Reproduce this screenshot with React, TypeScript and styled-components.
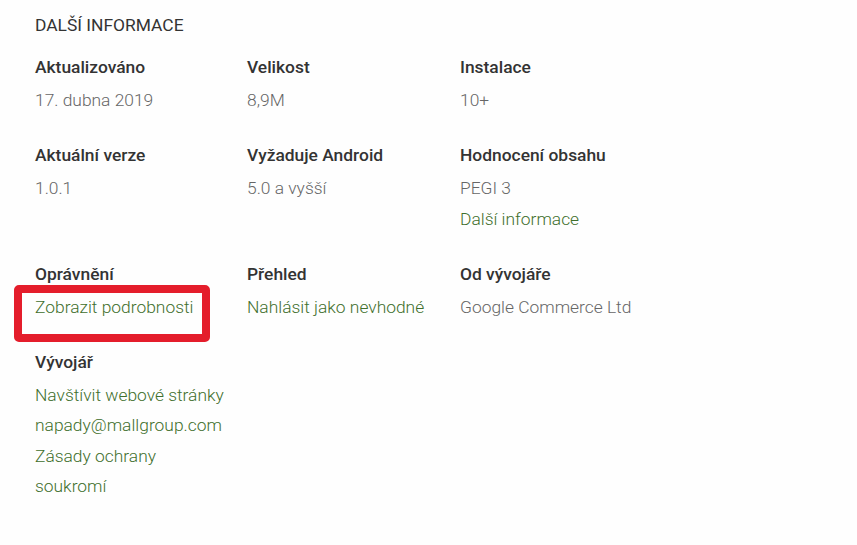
import React from "react";
import styled, { createGlobalStyle } from "styled-components";

const Global = createGlobalStyle`
  html, body { margin: 0; padding: 0; background: #ffffff; }
  body { font-family: Roboto, "Noto Sans", Arial, sans-serif; -webkit-font-smoothing: antialiased; }
`;

const Page = styled.div`
  width: 857px;
  height: 545px;
  box-sizing: border-box;
  padding: 13px 0 0 35px;
  background: #fefefe;
  overflow: hidden;
`;

const Heading = styled.h2`
  margin: 0 0 12px 0;
  font-size: 17.4px;
  line-height: 24px;
  font-weight: 400;
  color: #333333;
  text-transform: uppercase;
  letter-spacing: 0;
`;

const Grid = styled.div`
  display: grid;
  grid-template-columns: 212px 213px 213px;
  row-gap: 22px;
  align-items: start;
`;

const Cell = styled.div`
  position: relative;
  max-width: 193px;
`;

const Label = styled.div`
  font-size: 17.4px;
  line-height: 36px;
  font-weight: 500;
  color: #333333;
  white-space: nowrap;
`;

const Value = styled.div<{ $link?: boolean }>`
  font-size: 17.4px;
  line-height: 30.3px;
  font-weight: 300;
  color: ${(p) => (p.$link ? "#3f6f2c" : "#666666")};
`;

const Highlight = styled.div`
  position: absolute;
  left: -21px;
  top: 29px;
  width: 196px;
  height: 57px;
  box-sizing: border-box;
  border: 8px solid #e41d2b;
  border-radius: 5px;
  pointer-events: none;
`;

type Item = { text: string; link?: boolean };
type Info = { label: string; values: Item[]; highlight?: boolean };

const items: Info[] = [
  { label: "Aktualizováno", values: [{ text: "17. dubna 2019" }] },
  { label: "Velikost", values: [{ text: "8,9M" }] },
  { label: "Instalace", values: [{ text: "10+" }] },
  { label: "Aktuální verze", values: [{ text: "1.0.1" }] },
  { label: "Vyžaduje Android", values: [{ text: "5.0 a vyšší" }] },
  {
    label: "Hodnocení obsahu",
    values: [{ text: "PEGI 3" }, { text: "Další informace", link: true }],
  },
  {
    label: "Oprávnění",
    values: [{ text: "Zobrazit podrobnosti", link: true }],
    highlight: true,
  },
  { label: "Přehled", values: [{ text: "Nahlásit jako nevhodné", link: true }] },
  { label: "Od vývojáře", values: [{ text: "Google Commerce Ltd" }] },
  {
    label: "Vývojář",
    values: [
      { text: "Navštívit webové stránky", link: true },
      { text: "napady@mallgroup.com", link: true },
      { text: "Zásady ochrany soukromí", link: true },
    ],
  },
];

export default function App() {
  return (
    <>
      <Global />
      <Page>
        <Heading>Další informace</Heading>
        <Grid>
          {items.map((it) => (
            <Cell key={it.label}>
              <Label>{it.label}</Label>
              {it.values.map((v) => (
                <Value key={v.text} $link={v.link}>
                  {v.text}
                </Value>
              ))}
              {it.highlight && <Highlight />}
            </Cell>
          ))}
        </Grid>
      </Page>
    </>
  );
}
